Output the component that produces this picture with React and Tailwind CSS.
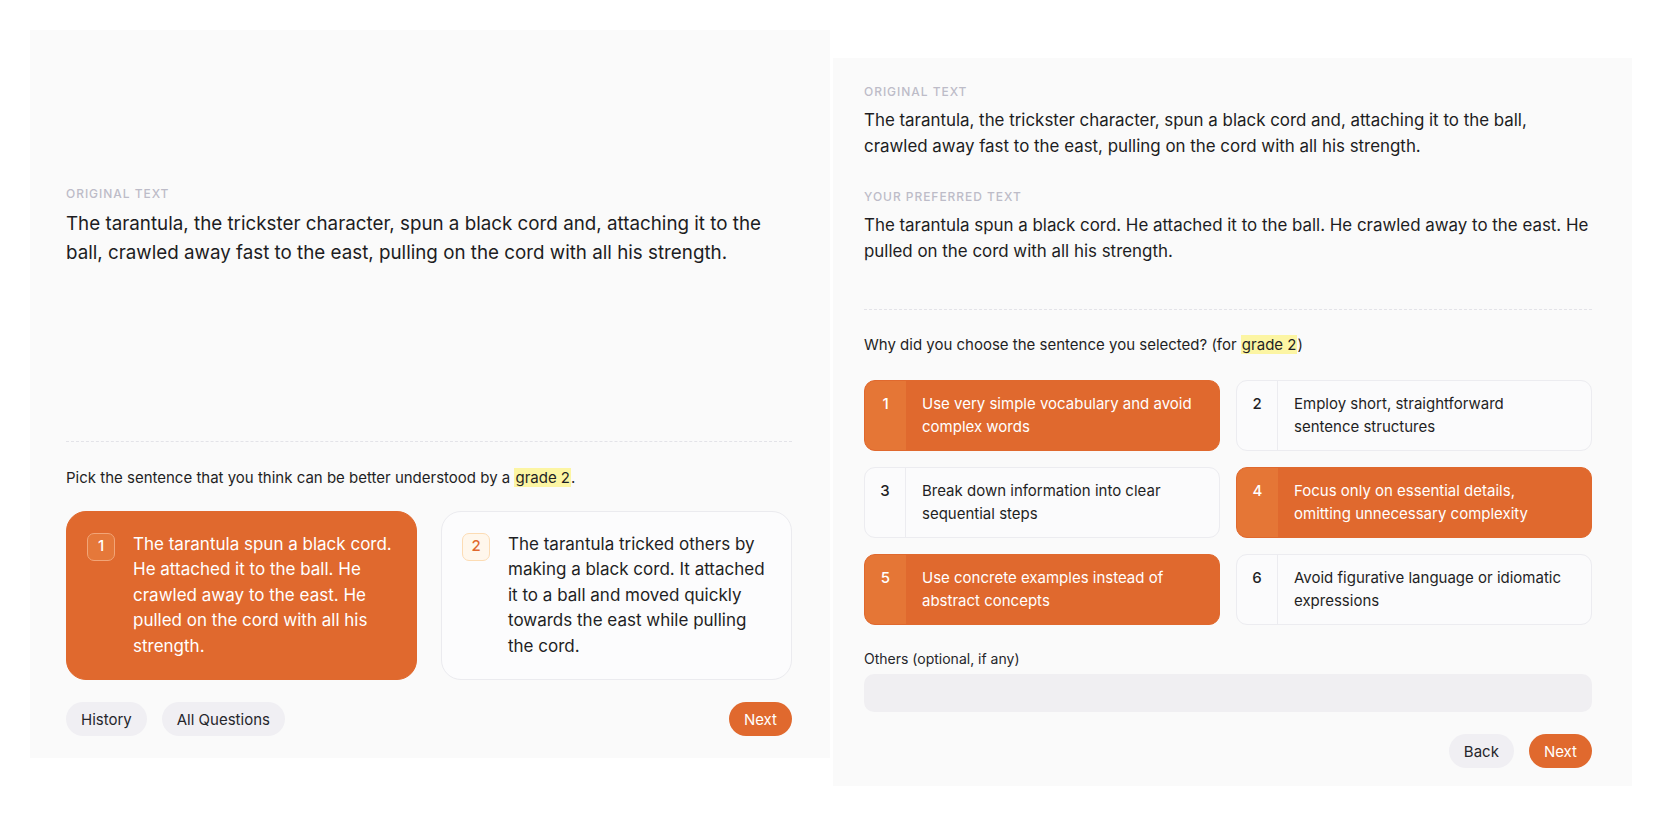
import React from "react";

const ORANGE = "bg-[#e0692e]";

const Label = ({ children }) => (
  <div className="text-[12px] leading-4 font-medium tracking-[0.08em] text-[#bdbcc8] uppercase">
    {children}
  </div>
);

const Mark = ({ children }) => (
  <span className="bg-[#fcf5a3] px-[1px]">{children}</span>
);

const Pill = ({ children, primary = false }) => (
  <button
    className={`h-[34px] px-[15px] rounded-full text-[15px] leading-none ${
      primary ? `${ORANGE} text-white` : "bg-[#f0eff3] text-[#26262b]"
    }`}
  >
    {children}
  </button>
);

const SentenceCard = ({ num, text, selected }) => (
  <div
    className={`flex items-start gap-[18px] rounded-[20px] border p-[20px] ${
      selected
        ? `${ORANGE} border-[#e0692e] text-white`
        : "bg-[#fcfcfd] border-[#ebebef] text-[#1f1f24]"
    }`}
  >
    <div
      className={`shrink-0 w-[28px] h-[28px] mt-[1px] rounded-[7px] border flex items-center justify-center text-[15px] font-medium ${
        selected
          ? "bg-[#e5783a] border-[#f2a577] text-white"
          : "bg-[#fff7ec] border-[#fcdcb4] text-[#e0692e]"
      }`}
    >
      {num}
    </div>
    <p className="text-[17px] leading-[25.5px]">{text}</p>
  </div>
);

const ReasonCard = ({ num, text, selected }) => (
  <div
    className={`flex rounded-[11px] border overflow-hidden ${
      selected
        ? `${ORANGE} border-[#e0692e] text-white`
        : "bg-[#fbfbfc] border-[#ececf0] text-[#1f1f24]"
    }`}
  >
    <div
      className={`w-[41px] shrink-0 flex items-start justify-center pt-[12px] text-[15px] leading-[22.5px] font-medium ${
        selected ? "bg-[#e57636]" : "border-r border-[#ececf0]"
      }`}
    >
      {num}
    </div>
    <div className="py-[12px] pl-[16px] pr-3 text-[15px] leading-[22.5px] whitespace-pre-line">
      {text}
    </div>
  </div>
);

const reasons = [
  ["Use very simple vocabulary and avoid\ncomplex words", true],
  ["Employ short, straightforward\nsentence structures", false],
  ["Break down information into clear\nsequential steps", false],
  ["Focus only on essential details,\nomitting unnecessary complexity", true],
  ["Use concrete examples instead of\nabstract concepts", true],
  ["Avoid figurative language or idiomatic\nexpressions", false],
];

export default function App() {
  return (
    <div
      className="w-[1661px] h-[816px] bg-white flex items-start gap-[3px] pl-[30px] text-[#1f1f24]"
      style={{ fontFamily: "Inter, 'Noto Sans', sans-serif" }}
    >
      {/* Step 1 */}
      <div className="mt-[30px] w-[800px] h-[728px] bg-[#fafafa] flex flex-col pl-[36px] pr-[38px] pb-[22px]">
        <div className="flex-1 flex flex-col justify-center pb-[16px]">
          <Label>Original text</Label>
          <p className="mt-[8px] text-[18.8px] leading-[28.8px] text-[#1d1d22] whitespace-pre-line">
            {
              "The tarantula, the trickster character, spun a black cord and, attaching it to the\nball, crawled away fast to the east, pulling on the cord with all his strength."
            }
          </p>
        </div>
        <div className="border-t border-dashed border-[#e3e3e8]" />
        <p className="mt-[25px] text-[15px] leading-[22px]">
          Pick the sentence that you think can be better understood by a{" "}
          <Mark>grade 2</Mark>.
        </p>
        <div className="mt-[22px] grid grid-cols-2 gap-[24px]">
          <SentenceCard
            num="1"
            selected
            text="The tarantula spun a black cord. He attached it to the ball. He crawled away to the east. He pulled on the cord with all his strength."
          />
          <SentenceCard
            num="2"
            text="The tarantula tricked others by making a black cord. It attached it to a ball and moved quickly towards the east while pulling the cord."
          />
        </div>
        <div className="mt-[22px] flex items-center gap-[15px]">
          <Pill>History</Pill>
          <Pill>All Questions</Pill>
          <div className="flex-1" />
          <Pill primary>Next</Pill>
        </div>
      </div>

      {/* Step 2 */}
      <div className="mt-[58px] w-[799px] h-[728px] bg-[#fafafa] flex flex-col pl-[31px] pr-[40px] pt-[26px] pb-[18px]">
        <Label>Original text</Label>
        <p className="mt-[8px] text-[16.9px] leading-[25.5px] text-[#1d1d22] whitespace-pre-line">
          {
            "The tarantula, the trickster character, spun a black cord and, attaching it to the ball,\ncrawled away fast to the east, pulling on the cord with all his strength."
          }
        </p>
        <div className="mt-[30px]">
          <Label>Your preferred text</Label>
        </div>
        <p className="mt-[8px] text-[16.9px] leading-[25.5px] text-[#1d1d22] whitespace-pre-line">
          {
            "The tarantula spun a black cord. He attached it to the ball. He crawled away to the east. He\npulled on the cord with all his strength."
          }
        </p>
        <div className="mt-[45px] border-t border-dashed border-[#e3e3e8]" />
        <p className="mt-[24px] text-[15px] leading-[22px]">
          Why did you choose the sentence you selected? (for{" "}
          <Mark>grade 2</Mark>)
        </p>
        <div className="mt-[24px] grid grid-cols-2 gap-[16px]">
          {reasons.map(([t, s], i) => (
            <ReasonCard key={i} num={i + 1} text={t} selected={s} />
          ))}
        </div>
        <p className="mt-[24px] text-[14px] leading-[20px] text-[#26262b]">
          Others (optional, if any)
        </p>
        <div className="mt-[5px] h-[38px] rounded-[10px] bg-[#f0eff2]" />
        <div className="flex-1" />
        <div className="flex justify-end gap-[15px]">
          <Pill>Back</Pill>
          <Pill primary>Next</Pill>
        </div>
      </div>
    </div>
  );
}
